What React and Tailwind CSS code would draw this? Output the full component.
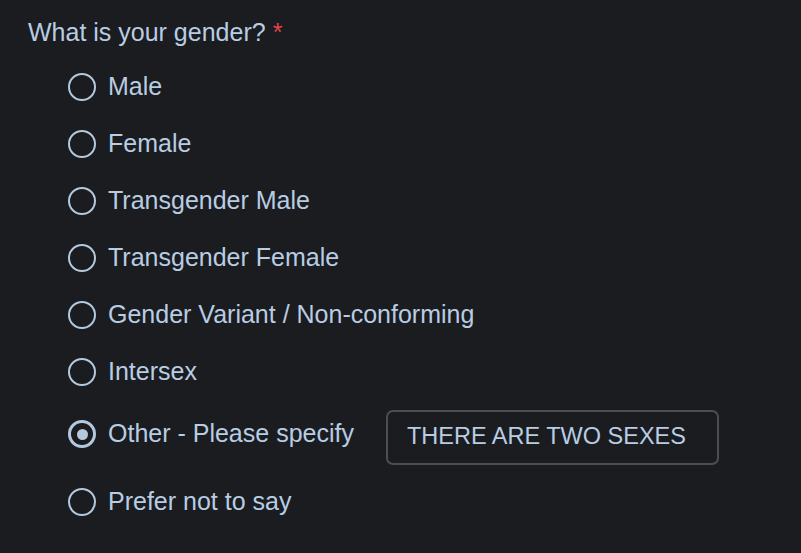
import React, { useState } from 'react';

const options = [
  'Male',
  'Female',
  'Transgender Male',
  'Transgender Female',
  'Gender Variant / Non-conforming',
  'Intersex',
  'Other - Please specify',
  'Prefer not to say',
];

const Radio = ({ checked }) => (
  <span
    className={
      'flex h-[28px] w-[28px] shrink-0 items-center justify-center rounded-full border-[#b4c9de] ' +
      (checked ? 'border-[3.5px]' : 'border-[2.5px]')
    }
  >
    {checked && <span className="h-[11px] w-[11px] rounded-full bg-[#b4c9de]" />}
  </span>
);

const App = () => {
  const [value] = useState('Other - Please specify');

  return (
    <div
      className="h-[553px] w-[801px] overflow-hidden bg-[#1b1c1f] text-[25px] text-[#b8cde3]"
      style={{ fontFamily: '"Liberation Sans", Arial, sans-serif' }}
    >
      <div className="px-[28px] pt-[18px]">
        <div className="flex h-[30px] items-center">
          What is your gender?<span className="ml-[7px] text-[#e0434d]">*</span>
        </div>
        <div className="mt-[10px] flex flex-col pl-[40px]">
          {options.map((opt) => {
            const isOther = opt === 'Other - Please specify';
            const rowH = isOther ? 'h-[68px]' : opt === 'Prefer not to say' ? 'h-[67px]' : 'h-[57px]';
            return (
              <label key={opt} className={'flex items-center gap-[12px] ' + rowH}>
                <Radio checked={value === opt} />
                <span>{opt}</span>
                {isOther && (
                  <div className="ml-[20px] mt-[6px] flex h-[55px] w-[333px] items-center rounded-[7px] border-2 border-[#4b4e54] px-[19px] text-[23.5px] text-[#b8cde3]">
                    THERE ARE TWO SEXES
                  </div>
                )}
              </label>
            );
          })}
        </div>
      </div>
    </div>
  );
};

export default App;
